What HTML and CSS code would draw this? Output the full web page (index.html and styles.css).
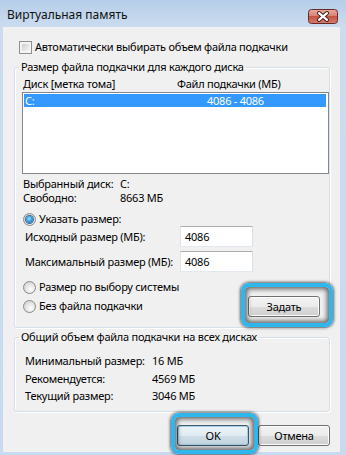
FILE: index.html
```html
<!DOCTYPE html>
<html>
<head>
    <meta charset="UTF-8">
    <title>Виртуальная память</title>
    <link rel="stylesheet" href="styles.css">
</head>
<body>
    <div class="window">
      <div class="titlebar">
        <span class="title">Виртуальная память</span>
        <button class="close-button" aria-label="Закрыть">
          <svg width="30" height="15" viewBox="0 0 30 15">
            <defs>
              <linearGradient id="closeFill" x1="0" y1="0" x2="0" y2="1">
                <stop offset="0" stop-color="#e8ab9d"/>
                <stop offset="0.45" stop-color="#d88473"/>
                <stop offset="0.5" stop-color="#c65442"/>
                <stop offset="1" stop-color="#d67d6c"/>
              </linearGradient>
            </defs>
            <rect x="0.5" y="0.5" width="29" height="14" rx="3" fill="url(#closeFill)" stroke="#6b2a2a"/>
            <path d="M11 4.2 L19 10.8 M19 4.2 L11 10.8" stroke="#4b2323" stroke-width="4.2" stroke-linecap="round"/>
            <path d="M11 4.2 L19 10.8 M19 4.2 L11 10.8" stroke="#ffffff" stroke-width="2.2" stroke-linecap="round"/>
          </svg>
        </button>
      </div>

      <div class="client">
        <div class="check-row">
          <span class="checkbox"></span>
          <span>Автоматически выбирать объем файла подкачки</span>
        </div>

        <fieldset class="group">
          <legend>Размер файла подкачки для каждого диска</legend>
          <div class="group-body disks">
            <div class="list-head">
              <span class="col-disk">Диск [метка тома]</span>
              <span>Файл подкачки (МБ)</span>
            </div>
            <div class="listbox">
              <div class="list-row selected">
                <span class="col-disk">C:</span>
                <span>4086 - 4086</span>
              </div>
            </div>

            <div class="info">
              <span>Выбранный диск:</span><span>C:</span>
              <span>Свободно:</span><span>8663 МБ</span>
            </div>

            <div class="radio-row first">
              <span class="radio checked"></span>
              <span>Указать размер:</span>
            </div>
            <div class="field-row">
              <span class="field-label">Исходный размер (МБ):</span>
              <span class="textbox">4086</span>
            </div>
            <div class="field-row second">
              <span class="field-label">Максимальный размер (МБ):</span>
              <span class="textbox">4086</span>
            </div>

            <div class="bottom-row">
              <div class="radios">
                <div class="radio-row">
                  <span class="radio"></span>
                  <span>Размер по выбору системы</span>
                </div>
                <div class="radio-row">
                  <span class="radio"></span>
                  <span>Без файла подкачки</span>
                </div>
              </div>
              <button class="btn set-button highlight">Задать</button>
            </div>
          </div>
        </fieldset>

        <fieldset class="group total">
          <legend>Общий объем файла подкачки на всех дисках</legend>
          <div class="group-body totals">
            <span>Минимальный размер:</span><span>16 МБ</span>
            <span>Рекомендуется:</span><span>4569 МБ</span>
            <span>Текущий размер:</span><span>3046 МБ</span>
          </div>
        </fieldset>

        <div class="dialog-buttons">
          <button class="btn default ok-button highlight">OK</button>
          <button class="btn">Отмена</button>
        </div>
      </div>
    </div>
</body>
</html>
```

FILE: styles.css
```css
body {
  margin: 0;
  font-family: "Noto Sans", "Segoe UI", sans-serif;
  font-size: 11px;
  letter-spacing: -0.25px;
  color: #000;
}

.window {
  width: 346px;
  height: 455px;
  box-sizing: border-box;
  padding: 0 6px 3px 3px;
  display: flex;
  flex-direction: column;
  background: linear-gradient(to bottom, #b6cee9 0, #cbdcef 27px, #c8daef 100%);
}

.titlebar {
  height: 27px;
  flex: 0 0 27px;
  display: flex;
  align-items: flex-start;
  justify-content: space-between;
}

.title {
  padding: 7px 0 0 4px;
  font-size: 12px;
  letter-spacing: 0;
  line-height: 16px;
  color: #111;
}

.close-button {
  margin: 9px 2px 0 0;
  padding: 0;
  border: none;
  background: none;
  width: 30px;
  height: 15px;
}

.close-button svg {
  display: block;
}

.client {
  flex: 1;
  background: #f0f0f0;
  padding: 13px 10px 0 11px;
  display: flex;
  flex-direction: column;
}

.check-row {
  display: flex;
  align-items: center;
  gap: 3px;
  height: 14px;
  line-height: 14px;
  padding-left: 5px;
  margin-bottom: 6px;
}

.checkbox {
  width: 13px;
  height: 13px;
  box-sizing: border-box;
  border: 1px solid #8f8f8f;
  background: #f4f4f4;
  padding: 2px;
}

.checkbox::before {
  content: "";
  display: block;
  width: 100%;
  height: 100%;
  background: linear-gradient(135deg, #c9cdd2, #f6f6f6);
}

/* group boxes */
.group {
  margin: 0;
  padding: 0;
  min-width: 0;
  border: 1px solid #d5dfe5;
  border-radius: 3px;
  box-shadow: inset 1px 1px 0 #fff, 1px 1px 0 #fff;
}

.group legend {
  margin-left: 4px;
  padding: 0 2px;
  line-height: 14px;
}

.group.total {
  margin-top: 2px;
}

.group-body.disks {
  padding: 3px 0 10px 7px;
}

.list-head {
  display: flex;
  height: 14px;
  line-height: 14px;
  padding-left: 1px;
}

.list-head .col-disk {
  width: 154px;
}

.listbox {
  margin-top: 1px;
  height: 82px;
  box-sizing: border-box;
  border: 1px solid #828790;
  background: #fff;
  padding: 1px 2px 0 1px;
}

.list-row {
  display: flex;
  height: 13px;
  line-height: 13px;
  padding-left: 1px;
}

.list-row.selected {
  background: #3399ff;
  color: #fff;
}

.list-row .col-disk {
  width: 182px;
}

.info {
  margin-top: 3px;
  padding-left: 1px;
  display: grid;
  grid-template-columns: 97px auto;
  line-height: 14px;
}

.radio-row {
  display: flex;
  align-items: center;
  gap: 3px;
  height: 14px;
  line-height: 14px;
  padding-left: 1px;
}

.radio-row.first {
  margin-top: 7px;
}

.radio {
  width: 13px;
  height: 13px;
  box-sizing: border-box;
  border-radius: 50%;
  border: 1px solid #8a8a8a;
  background: radial-gradient(circle at 60% 65%, #ffffff 0, #e6e6e6 45%, #c9c9c9 100%);
  display: flex;
  align-items: center;
  justify-content: center;
}

.radio.checked::before {
  content: "";
  width: 7px;
  height: 7px;
  border-radius: 50%;
  background: radial-gradient(circle at 45% 40%, #a9e2ff 0, #3a9fe0 45%, #124a8c 100%);
  box-shadow: 0 0 0 1px #3b6e9c;
}

.field-row {
  display: flex;
  align-items: center;
  height: 21px;
  padding-left: 3px;
}

.field-row.second {
  margin-top: 4px;
}

.field-label {
  width: 155px;
}

.textbox {
  width: 73px;
  height: 21px;
  box-sizing: border-box;
  border: 1px solid;
  border-color: #abadb3 #dbdfe6 #e3e9ef #e2e3ea;
  background: #fff;
  padding-left: 4px;
  line-height: 19px;
}

.bottom-row {
  display: flex;
  justify-content: space-between;
  align-items: flex-start;
  margin-top: 8px;
  padding-right: 9px;
}

.radios {
  display: flex;
  flex-direction: column;
  gap: 5px;
}

.set-button {
  margin-top: 16px;
}

.group-body.totals {
  padding: 8px 0 6px 10px;
  display: grid;
  grid-template-columns: 127px auto;
  line-height: 17.5px;
}

/* buttons */
.btn {
  position: relative;
  width: 72px;
  height: 21px;
  padding: 0;
  font: inherit;
  letter-spacing: inherit;
  color: #000;
  border: 1px solid #707070;
  border-radius: 3px;
  background: linear-gradient(to bottom, #f2f2f2 0, #ebebeb 50%, #dddddd 50%, #cfcfcf 100%);
  box-shadow: inset 0 0 0 1px #fcfcfc;
}

.btn.default {
  border-color: #3c5a6e;
  background: linear-gradient(to bottom, #eaf3f8 0, #e0ebf1 50%, #cfdee8 50%, #c3d4df 100%);
  box-shadow: inset 0 0 0 1px #a9cfe6;
}

.dialog-buttons {
  display: flex;
  justify-content: flex-end;
  gap: 9px;
  margin-top: 13px;
}

/* cyan annotation rings drawn over the buttons */
.highlight::after {
  content: "";
  position: absolute;
  border: 4px solid #2fb6ec;
  border-radius: 8px;
  box-shadow: 0 0 3px 1px rgba(0, 0, 0, 0.6), inset 0 0 5px 2px rgba(0, 0, 0, 0.6);
  pointer-events: none;
  z-index: 2;
}

.set-button.highlight::after {
  top: -14px;
  bottom: -11px;
  left: -8px;
  right: -14px;
}

.ok-button.highlight::after {
  top: -13px;
  bottom: -9px;
  left: -7px;
  right: -10px;
}
```
